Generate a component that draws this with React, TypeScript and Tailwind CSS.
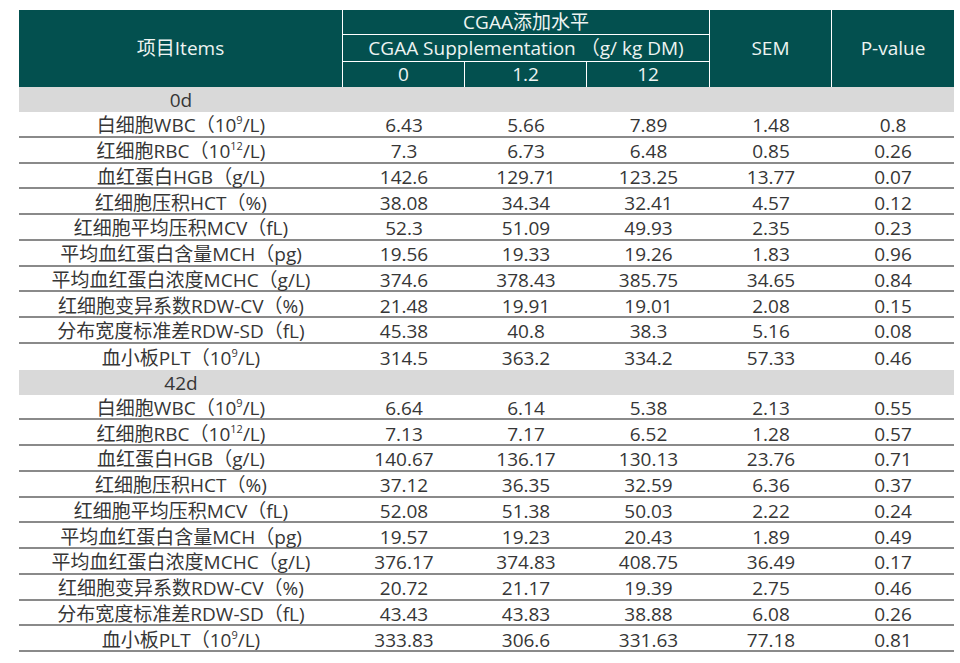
import React from "react";

type Row = { name: React.ReactNode; v: string[] };

const sup = (s: string) => (
  <span className="inline-block align-top text-[11px] leading-none relative top-[-2px]">{s}</span>
);

const names: React.ReactNode[] = [
  <>白细胞WBC（10{sup("9")}/L)</>,
  <>红细胞RBC（10{sup("12")}/L)</>,
  <>血红蛋白HGB（g/L)</>,
  <>红细胞压积HCT（%)</>,
  <>红细胞平均压积MCV（fL)</>,
  <>平均血红蛋白含量MCH（pg)</>,
  <>平均血红蛋白浓度MCHC（g/L)</>,
  <>红细胞变异系数RDW-CV（%)</>,
  <>分布宽度标准差RDW-SD（fL)</>,
  <>血小板PLT（10{sup("9")}/L)</>,
];

const day0 = [
  ["6.43", "5.66", "7.89", "1.48", "0.8"],
  ["7.3", "6.73", "6.48", "0.85", "0.26"],
  ["142.6", "129.71", "123.25", "13.77", "0.07"],
  ["38.08", "34.34", "32.41", "4.57", "0.12"],
  ["52.3", "51.09", "49.93", "2.35", "0.23"],
  ["19.56", "19.33", "19.26", "1.83", "0.96"],
  ["374.6", "378.43", "385.75", "34.65", "0.84"],
  ["21.48", "19.91", "19.01", "2.08", "0.15"],
  ["45.38", "40.8", "38.3", "5.16", "0.08"],
  ["314.5", "363.2", "334.2", "57.33", "0.46"],
];

const day42 = [
  ["6.64", "6.14", "5.38", "2.13", "0.55"],
  ["7.13", "7.17", "6.52", "1.28", "0.57"],
  ["140.67", "136.17", "130.13", "23.76", "0.71"],
  ["37.12", "36.35", "32.59", "6.36", "0.37"],
  ["52.08", "51.38", "50.03", "2.22", "0.24"],
  ["19.57", "19.23", "20.43", "1.89", "0.49"],
  ["376.17", "374.83", "408.75", "36.49", "0.17"],
  ["20.72", "21.17", "19.39", "2.75", "0.46"],
  ["43.43", "43.83", "38.88", "6.08", "0.26"],
  ["333.83", "306.6", "331.63", "77.18", "0.81"],
];

const cols = ["w-[122px]", "w-[122px]", "w-[123px]", "w-[122px]", "w-[122px]"];

function DataRow({ row, last }: { row: Row; last: boolean }) {
  return (
    <div
      className={`flex h-[25.75px] box-border items-center pt-[4px] ${last ? "" : "border-b-2 border-[#8a8a8a]"}`}
    >
      <div className="w-[324px] text-center whitespace-nowrap">{row.name}</div>
      {row.v.map((x, i) => (
        <div key={i} className={`${cols[i]} text-center`}>
          {x}
        </div>
      ))}
    </div>
  );
}

function Section({ label, data, lastBorder }: { label: string; data: string[][]; lastBorder: boolean }) {
  return (
    <>
      <div className="flex h-[25px] items-center bg-[#d9d9d9] pt-[2px]">
        <div className="w-[324px] text-center">{label}</div>
      </div>
      {data.map((v, i) => (
        <DataRow key={i} row={{ name: names[i], v }} last={i === data.length - 1 && !lastBorder} />
      ))}
    </>
  );
}

export default function App() {
  return (
    <div
      className="w-[960px] h-[663px] bg-white pt-[10px] pl-[19px] text-[19px] leading-none text-[#363636]"
      style={{ fontFamily: '"Open Sans", "Noto Sans CJK SC", sans-serif' }}
    >
      <div className="w-[935px]">
        <div className="flex h-[77px] bg-[#03504f] text-[#eef4f2]">
          <div className="w-[324px] flex items-center justify-center border-r border-white">项目Items</div>
          <div className="w-[367px] flex flex-col border-r border-white">
            <div className="h-[25px] flex items-center justify-center border-b border-white">CGAA添加水平</div>
            <div className="h-[27px] flex items-center justify-center border-b border-white whitespace-nowrap">
              CGAA Supplementation （g/ kg DM)
            </div>
            <div className="flex-1 flex">
              <div className="w-[122px] flex items-center justify-center border-r border-white">0</div>
              <div className="w-[122px] flex items-center justify-center border-r border-white">1.2</div>
              <div className="flex-1 flex items-center justify-center">12</div>
            </div>
          </div>
          <div className="w-[122px] flex items-center justify-center border-r border-white">SEM</div>
          <div className="flex-1 flex items-center justify-center">P-value</div>
        </div>
        <Section label="0d" data={day0} lastBorder={false} />
        <Section label="42d" data={day42} lastBorder={true} />
      </div>
    </div>
  );
}
